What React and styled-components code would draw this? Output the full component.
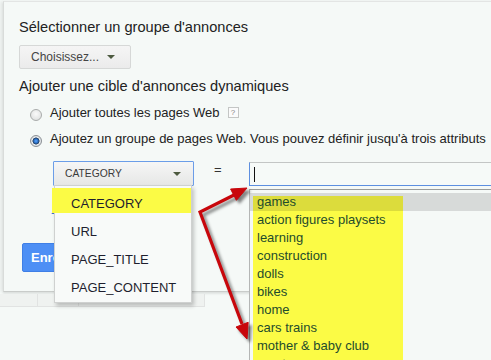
import React from "react";
import styled, { createGlobalStyle, css } from "styled-components";

const GlobalStyle = createGlobalStyle`
  html, body { margin: 0; padding: 0; background: #f5f9f7; }
  body { font-family: "Liberation Sans", Arial, sans-serif; color: #222; }
`;

const Page = styled.div`
  position: relative;
  width: 491px;
  height: 360px;
  overflow: hidden;
  padding-top: 1px;
  box-sizing: border-box;
  background: #f5f9f7;
`;

const Panel = styled.div`
  box-sizing: border-box;
  width: 540px;
  height: 291px;
  margin-left: 3px;
  padding: 16px 0 0 15px;
  border-top: 1px solid #e3e5e4;
  border-left: 1px solid #d9dcda;
  border-bottom: 1px solid #c9ccca;
  box-shadow: -3px 0 3px rgba(0, 0, 0, 0.06), 0 2px 2px rgba(0, 0, 0, 0.08);
  display: flex;
  flex-direction: column;
  align-items: flex-start;
`;

const Heading = styled.div`
  font-size: 14.6px;
  line-height: 18px;
  color: #222;
  white-space: nowrap;
  margin-top: ${(p) => p.$mt || 0}px;
`;

const Caret = styled.span`
  display: inline-block;
  width: 0;
  height: 0;
  border-left: 4px solid transparent;
  border-right: 4px solid transparent;
  border-top: 4px solid #4d5a40;
`;

const MenuButton = styled.div`
  box-sizing: border-box;
  margin-top: 9px;
  width: 112px;
  height: 24px;
  display: flex;
  align-items: center;
  gap: 8px;
  padding-left: 11px;
  font-size: 12px;
  color: #444;
  border: 1px solid #d6d8d7;
  border-radius: 2px;
  background: linear-gradient(#f5f5f5, #ebebeb);
`;

const RadioRow = styled.div`
  display: flex;
  align-items: center;
  height: 20px;
  margin-top: ${(p) => p.$mt}px;
  margin-left: 11px;
  white-space: nowrap;
`;

const Radio = styled.span`
  box-sizing: border-box;
  width: 12px;
  height: 12px;
  margin-top: 4px;
  border-radius: 50%;
  border: 1px solid #a9acab;
  background: radial-gradient(circle at 50% 40%, #fafafa 0%, #d9dbda 100%);
  ${(p) =>
    p.$checked &&
    css`
      border-color: #8c9196;
      background: radial-gradient(
        circle at 50% 50%,
        #5aa6ff 0,
        #2b6fc4 2px,
        #233c5a 3.2px,
        #e9ecee 3.8px,
        #cfd3d6 6px
      );
    `}
`;

const Label = styled.span`
  margin-left: 8px;
  font-size: 13px;
  line-height: 16px;
  color: #222;
`;

const Help = styled.span`
  box-sizing: border-box;
  margin-left: 8px;
  margin-top: -2px;
  width: 11px;
  height: 11px;
  border: 1px solid #c4c6c5;
  background: #fbfbfb;
  color: #888;
  font-size: 8px;
  line-height: 9px;
  text-align: center;
`;

const RuleRow = styled.div`
  display: flex;
  align-items: flex-start;
  margin-top: 12px;
  margin-left: 34px;
`;

const SelectWrap = styled.div`
  position: relative;
`;

const Select = styled.div`
  box-sizing: border-box;
  width: 141px;
  height: 25px;
  display: flex;
  align-items: center;
  justify-content: space-between;
  padding: 0 12px 0 11px;
  font-size: 10.3px;
  color: #3a3a3a;
  border: 1px solid #6b9de8;
  border-radius: 1px;
  background: linear-gradient(#f6f6f6, #e6e7e6);
`;

const Menu = styled.div`
  position: absolute;
  top: 24px;
  left: 1px;
  width: 138px;
  box-sizing: border-box;
  padding: 4px 0 0;
  background: #f8faf9;
  border: 1px solid #cfd1d0;
  box-shadow: 2px 3px 4px rgba(0, 0, 0, 0.22);
  z-index: 3;
`;

const MenuItem = styled.div`
  position: relative;
  height: 28px;
  line-height: 28px;
  padding-left: 16px;
  font-size: 13px;
  color: #1e1e2e;
  ${(p) =>
    p.$marked &&
    css`
      &::before {
        content: "";
        position: absolute;
        left: -3px;
        top: -2px;
        width: 139px;
        height: 25px;
        background: #fbfb45;
        z-index: -1;
      }
    `}
  z-index: 0;
`;

const Equals = styled.span`
  width: 55px;
  padding-left: 20px;
  box-sizing: border-box;
  font-size: 13px;
  line-height: 16px;
  margin-top: 1px;
  color: #333;
`;

const InputWrap = styled.div`
  position: relative;
  width: 260px;
`;

const Input = styled.div`
  box-sizing: border-box;
  height: 24px;
  margin-top: 1px;
  padding: 4px 0 0 4px;
  border: 1px solid #5d8fe0;
  border-top-color: #c3c6c5;
  background: #f6faf8;
`;

const CaretLine = styled.span`
  display: block;
  width: 1px;
  height: 15px;
  background: #111;
`;

const Suggest = styled.div`
  position: absolute;
  top: 28px;
  left: 0;
  width: 242px;
  height: 200px;
  padding-top: 3px;
  box-sizing: border-box;
  border-top: 1px solid #9a9c9b;
  border-left: 1px solid #b4b6b5;
  background: #f5f9f7;
  z-index: 2;
`;

const YellowBand = styled.div`
  position: absolute;
  left: 3px;
  top: 6px;
  width: 150px;
  bottom: 0;
  background: #fbfb45;
`;

const SuggestItem = styled.div`
  position: relative;
  height: 18px;
  line-height: 18px;
  padding-left: 7px;
  font-size: 13px;
  color: #1f4c2c;
  white-space: nowrap;
  background: ${(p) => (p.$active ? "rgba(0, 0, 0, 0.12)" : "transparent")};
`;

const AddLink = styled.div`
  margin-top: 20px;
  margin-left: 32px;
  font-size: 13px;
  line-height: 16px;
  color: #3a6fcf;
`;

const SaveButton = styled.div`
  box-sizing: border-box;
  margin-top: 21px;
  margin-left: 3px;
  height: 29px;
  padding: 0 8px;
  display: flex;
  align-items: center;
  font-size: 13px;
  font-weight: bold;
  color: #fff;
  background: #4d8ff5;
  border: 1px solid #3f7fe6;
  border-radius: 2px;
`;

const GridStrip = styled.div`
  display: flex;
  width: 205px;
  height: 12px;
  margin-top: 2px;
  border-bottom: 1px solid #e1e3e2;
`;

const GridCell = styled.div`
  width: ${(p) => p.$w}px;
  border-right: 1px solid #e1e3e2;
  background: #eff2f0;
`;

const Overlay = styled.svg`
  position: absolute;
  left: 0;
  top: 0;
  pointer-events: none;
  z-index: 5;
`;

const options = ["CATEGORY", "URL", "PAGE_TITLE", "PAGE_CONTENT"];
const suggestions = [
  "games",
  "action figures playsets",
  "learning",
  "construction",
  "dolls",
  "bikes",
  "home",
  "cars trains",
  "mother & baby club",
  "sports",
];

function Arrows() {
  const paths = (
    <>
      <polyline points="236,194 200,212 242,324" fill="none" strokeWidth="3.2" strokeLinejoin="miter" />
      <polygon points="247,188 236.4,200.3 230.6,189" />
      <polygon points="247,339 248.2,322.3 236,327" />
    </>
  );
  return (
    <Overlay width="491" height="360" viewBox="0 0 491 360">
      <defs>
        <filter id="blur" x="-20%" y="-20%" width="140%" height="140%">
          <feGaussianBlur stdDeviation="1.6" />
        </filter>
      </defs>
      <g transform="translate(3,3)" fill="rgba(0,0,0,0.45)" stroke="rgba(0,0,0,0.45)" filter="url(#blur)">
        {paths}
      </g>
      <g fill="#c8070c" stroke="#c8070c">{paths}</g>
    </Overlay>
  );
}

export default function App() {
  return (
    <>
      <GlobalStyle />
      <Page>
        <Panel>
          <Heading>Sélectionner un groupe d'annonces</Heading>
          <MenuButton>
            Choisissez... <Caret />
          </MenuButton>
          <Heading $mt={8}>Ajouter une cible d'annonces dynamiques</Heading>
          <RadioRow $mt={8}>
            <Radio />
            <Label>Ajouter toutes les pages Web</Label>
            <Help>?</Help>
          </RadioRow>
          <RadioRow $mt={6}>
            <Radio $checked />
            <Label>
              Ajoutez un groupe de pages Web. Vous pouvez définir jusqu'à trois attributs
            </Label>
          </RadioRow>
          <RuleRow>
            <SelectWrap>
              <Select>
                CATEGORY <Caret />
              </Select>
              <Menu>
                {options.map((o, i) => (
                  <MenuItem key={o} $marked={i === 0}>
                    {o}
                  </MenuItem>
                ))}
              </Menu>
            </SelectWrap>
            <Equals>=</Equals>
            <InputWrap>
              <Input>
                <CaretLine />
              </Input>
              <Suggest>
                <YellowBand />
                {suggestions.map((s, i) => (
                  <SuggestItem key={s} $active={i === 0}>
                    {s}
                  </SuggestItem>
                ))}
              </Suggest>
            </InputWrap>
          </RuleRow>
          <AddLink>+</AddLink>
          <SaveButton>Enregistrer</SaveButton>
        </Panel>
        <GridStrip>
          <GridCell $w={37} />
          <GridCell $w={41} />
          <GridCell $w={126} />
        </GridStrip>
        <Arrows />
      </Page>
    </>
  );
}
